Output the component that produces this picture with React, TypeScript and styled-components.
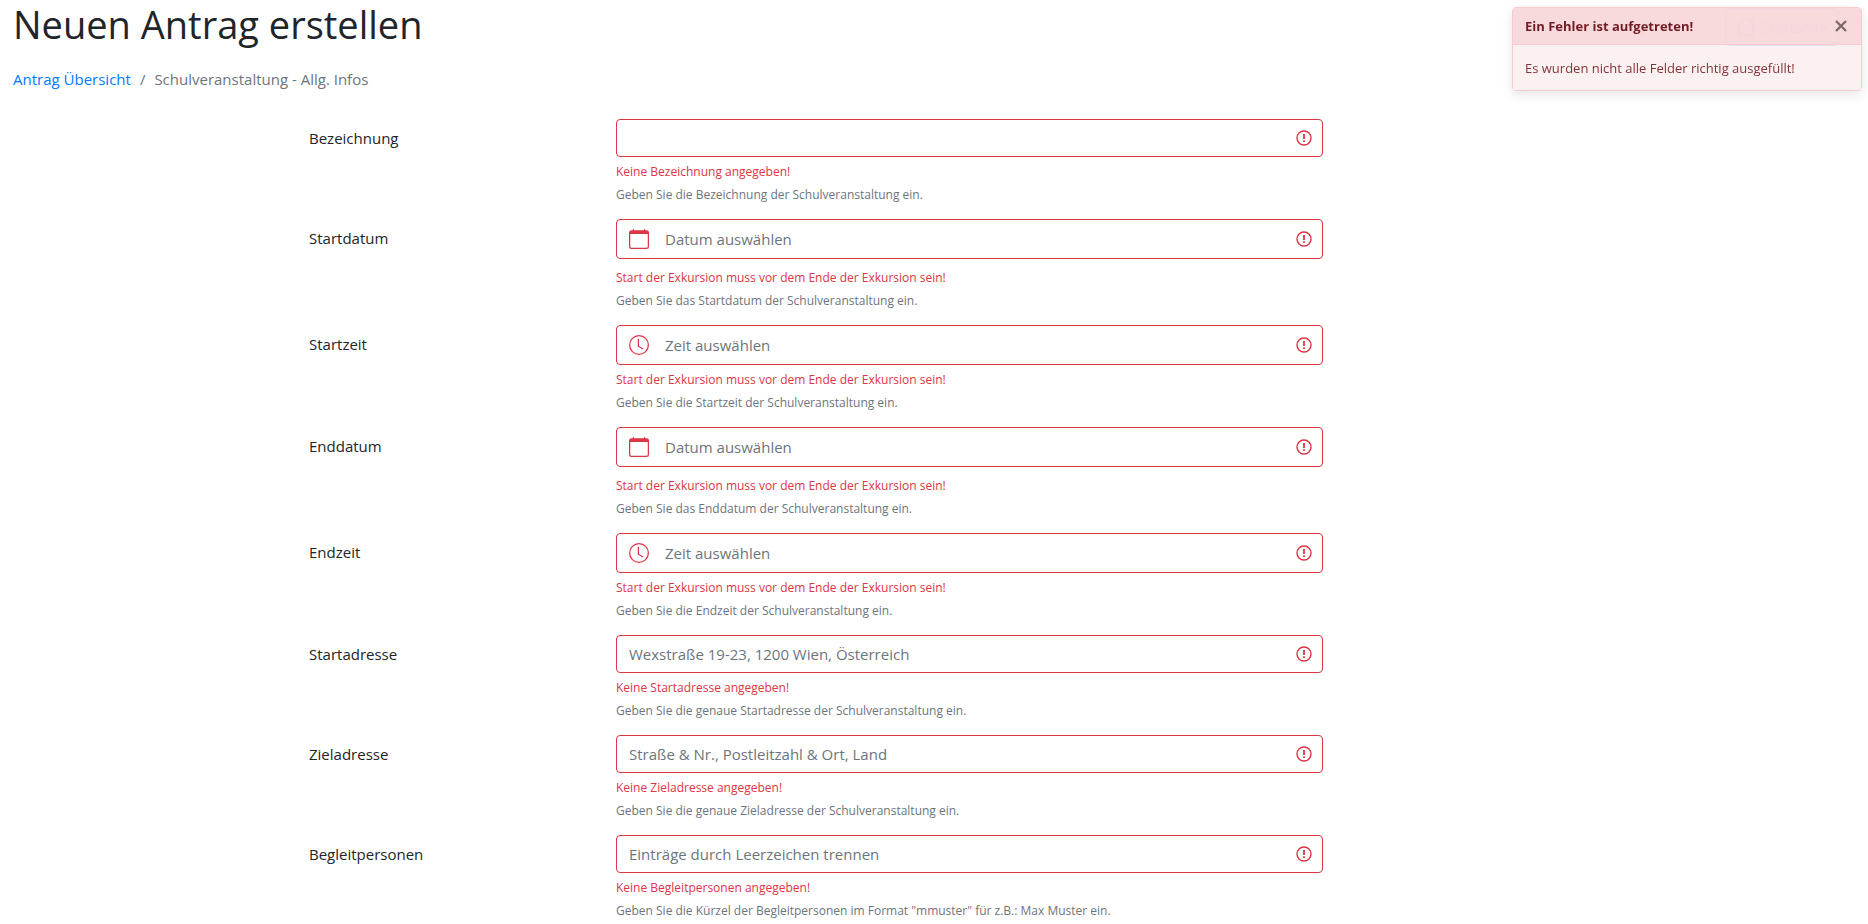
import React, { useState } from "react";
import styled, { createGlobalStyle, css } from "styled-components";

const GlobalStyle = createGlobalStyle`
  *, *::before, *::after { box-sizing: border-box; }
  body {
    margin: 0;
    background: #fff;
    color: #212529;
    font-family: "Segoe UI", "Open Sans", "Noto Sans", sans-serif;
    font-size: 15px;
    line-height: 24px;
  }
`;

const Page = styled.main`
  padding: 0 13px;
`;

const TitleBar = styled.header`
  display: flex;
  align-items: flex-start;
  justify-content: space-between;
  padding-right: 16px;
`;

const Title = styled.h1`
  margin: 0;
  font-size: 38px;
  font-weight: 400;
  line-height: 48px;
`;

const HomeButton = styled.button`
  display: flex;
  align-items: center;
  gap: 5px;
  height: 38px;
  margin-top: 8px;
  padding: 0 10px;
  border: 1px solid #007bff;
  border-radius: 4px;
  background: transparent;
  color: #007bff;
  font: inherit;
  cursor: pointer;
`;

const Breadcrumb = styled.nav`
  display: flex;
  gap: 9px;
  padding: 19px 0 28px;
  color: #6c757d;
`;

const HomeCrumb = styled.a`
  color: #007bff;
  text-decoration: none;
  &:hover { text-decoration: underline; }
`;

const Form = styled.form`
  display: flex;
  flex-direction: column;
  gap: 15px;
`;

const FormRow = styled.div`
  display: grid;
  grid-template-columns: 296fr 307fr 707fr 532fr;
`;

const Label = styled.label`
  grid-column: 2;
  padding-top: 7px;
`;

const Control = styled.div`
  grid-column: 3;
  min-width: 0;
`;

const InputShell = styled.div<{ $tall: boolean }>`
  display: flex;
  align-items: center;
  height: ${(p) => (p.$tall ? 40 : 38)}px;
  padding: 0 10px 0 12px;
  border: 1px solid #dc3545;
  border-radius: 4px;
  color: #dc3545;
`;

const Input = styled.input<{ $inset: boolean }>`
  flex: 1;
  min-width: 0;
  height: 100%;
  padding: 0;
  margin-left: ${(p) => (p.$inset ? 16 : 0)}px;
  border: 0;
  outline: 0;
  background: transparent;
  color: #495057;
  font: inherit;
  &::placeholder { color: #6c757d; opacity: 1; }
`;

const note = css`
  margin: 0;
  font-size: 12px;
  line-height: 19px;
`;

const ErrorText = styled.p<{ $spaced: boolean }>`
  ${note}
  padding-top: ${(p) => (p.$spaced ? 9 : 5)}px;
  color: #dc3545;
`;

const HelpText = styled.p`
  ${note}
  padding-top: 4px;
  color: #6c757d;
`;

const Toast = styled.section`
  position: fixed;
  top: 7px;
  right: 6px;
  width: 350px;
  overflow: hidden;
  border: 1px solid #f7cbd0;
  border-radius: 4px;
  color: #721c24;
  font-size: 13px;
  box-shadow: 0 4px 12px rgba(0, 0, 0, 0.1);
`;

const ToastHeader = styled.header`
  display: flex;
  align-items: center;
  justify-content: space-between;
  height: 37px;
  padding: 0 13px 0 12px;
  border-bottom: 1px solid #f7cbd0;
  background: rgba(248, 216, 219, 0.98);
`;

const ToastBody = styled.p`
  margin: 0;
  padding: 13px 12px 11px;
  line-height: 21px;
  color: #84343c;
  background: rgba(252, 239, 239, 0.9);
`;

const CloseButton = styled.button`
  display: flex;
  padding: 0;
  border: 0;
  background: transparent;
  color: #7c6b6d;
  cursor: pointer;
`;

const HouseIcon = () => (
  <svg width="20" height="20" viewBox="0 0 16 16" fill="none" stroke="currentColor" strokeLinejoin="round" strokeLinecap="round" aria-hidden="true">
    <path d="M1 8l7-7 7 7M2.5 7v7.5h11V7M11.5 4V2h2v4" />
  </svg>
);

const CalendarIcon = () => (
  <svg width="20" height="20" viewBox="0 0 16 16" fill="currentColor" aria-hidden="true">
    <path d="M3.5 0a.5.5 0 0 1 .5.5V1h8V.5a.5.5 0 0 1 1 0V1h1a2 2 0 0 1 2 2v11a2 2 0 0 1-2 2H2a2 2 0 0 1-2-2V3a2 2 0 0 1 2-2h1V.5a.5.5 0 0 1 .5-.5zM1 4v10a1 1 0 0 0 1 1h12a1 1 0 0 0 1-1V4H1z" />
  </svg>
);

const ClockIcon = () => (
  <svg width="20" height="20" viewBox="0 0 16 16" fill="currentColor" aria-hidden="true">
    <path d="M8 3.5a.5.5 0 0 0-1 0V9a.5.5 0 0 0 .252.434l3.5 2a.5.5 0 0 0 .496-.868L8 8.71V3.5z" />
    <path d="M8 16A8 8 0 1 0 8 0a8 8 0 0 0 0 16zm7-8A7 7 0 1 1 1 8a7 7 0 0 1 14 0z" />
  </svg>
);

const InvalidIcon = () => (
  <svg width="16" height="16" viewBox="0 0 16 16" fill="none" stroke="currentColor" aria-hidden="true">
    <circle cx="8" cy="8" r="7" strokeWidth="1.4" />
    <path d="M8 4v5M8 10.2v1.8" strokeWidth="1.8" />
  </svg>
);

type Field = {
  id: string;
  label: string;
  kind?: "date" | "time";
  placeholder?: string;
  error: string;
  help: string;
};

const ORDER_ERROR = "Start der Exkursion muss vor dem Ende der Exkursion sein!";

const FIELDS: Field[] = [
  { id: "bezeichnung", label: "Bezeichnung", error: "Keine Bezeichnung angegeben!", help: "Geben Sie die Bezeichnung der Schulveranstaltung ein." },
  { id: "startdatum", label: "Startdatum", kind: "date", placeholder: "Datum auswählen", error: ORDER_ERROR, help: "Geben Sie das Startdatum der Schulveranstaltung ein." },
  { id: "startzeit", label: "Startzeit", kind: "time", placeholder: "Zeit auswählen", error: ORDER_ERROR, help: "Geben Sie die Startzeit der Schulveranstaltung ein." },
  { id: "enddatum", label: "Enddatum", kind: "date", placeholder: "Datum auswählen", error: ORDER_ERROR, help: "Geben Sie das Enddatum der Schulveranstaltung ein." },
  { id: "endzeit", label: "Endzeit", kind: "time", placeholder: "Zeit auswählen", error: ORDER_ERROR, help: "Geben Sie die Endzeit der Schulveranstaltung ein." },
  { id: "startadresse", label: "Startadresse", placeholder: "Wexstraße 19-23, 1200 Wien, Österreich", error: "Keine Startadresse angegeben!", help: "Geben Sie die genaue Startadresse der Schulveranstaltung ein." },
  { id: "zieladresse", label: "Zieladresse", placeholder: "Straße & Nr., Postleitzahl & Ort, Land", error: "Keine Zieladresse angegeben!", help: "Geben Sie die genaue Zieladresse der Schulveranstaltung ein." },
  { id: "begleitpersonen", label: "Begleitpersonen", placeholder: "Einträge durch Leerzeichen trennen", error: "Keine Begleitpersonen angegeben!", help: "Geben Sie die Kürzel der Begleitpersonen im Format \"mmuster\" für z.B.: Max Muster ein." },
];

const FormField = ({ id, label, kind, placeholder, error, help }: Field) => (
  <FormRow>
    <Label htmlFor={id}>{label}</Label>
    <Control>
      <InputShell $tall={!!kind}>
        {kind === "date" && <CalendarIcon />}
        {kind === "time" && <ClockIcon />}
        <Input id={id} type="text" $inset={!!kind} placeholder={placeholder} aria-invalid="true" aria-describedby={`${id}-error ${id}-help`} />
        <InvalidIcon />
      </InputShell>
      <ErrorText id={`${id}-error`} $spaced={kind === "date"}>{error}</ErrorText>
      <HelpText id={`${id}-help`}>{help}</HelpText>
    </Control>
  </FormRow>
);

export default function App() {
  const [toastOpen, setToastOpen] = useState(true);
  return (
    <>
      <GlobalStyle />
      <Page>
        <TitleBar>
          <Title>Neuen Antrag erstellen</Title>
          <HomeButton type="button">
            <HouseIcon />
            Startseite
          </HomeButton>
        </TitleBar>
        <Breadcrumb aria-label="Breadcrumb">
          <HomeCrumb href="#">Antrag Übersicht</HomeCrumb>
          <span>/</span>
          <span aria-current="page">Schulveranstaltung - Allg. Infos</span>
        </Breadcrumb>
        <Form>
          {FIELDS.map((f) => <FormField key={f.id} {...f} />)}
        </Form>
      </Page>
      {toastOpen && (
        <Toast role="alert">
          <ToastHeader>
            <strong>Ein Fehler ist aufgetreten!</strong>
            <CloseButton type="button" aria-label="Schließen" onClick={() => setToastOpen(false)}>
              <svg width="14" height="14" viewBox="0 0 14 14" stroke="currentColor" strokeWidth="2.4" aria-hidden="true">
                <path d="M2 2l10 10M12 2L2 12" />
              </svg>
            </CloseButton>
          </ToastHeader>
          <ToastBody>Es wurden nicht alle Felder richtig ausgefüllt!</ToastBody>
        </Toast>
      )}
    </>
  );
}
